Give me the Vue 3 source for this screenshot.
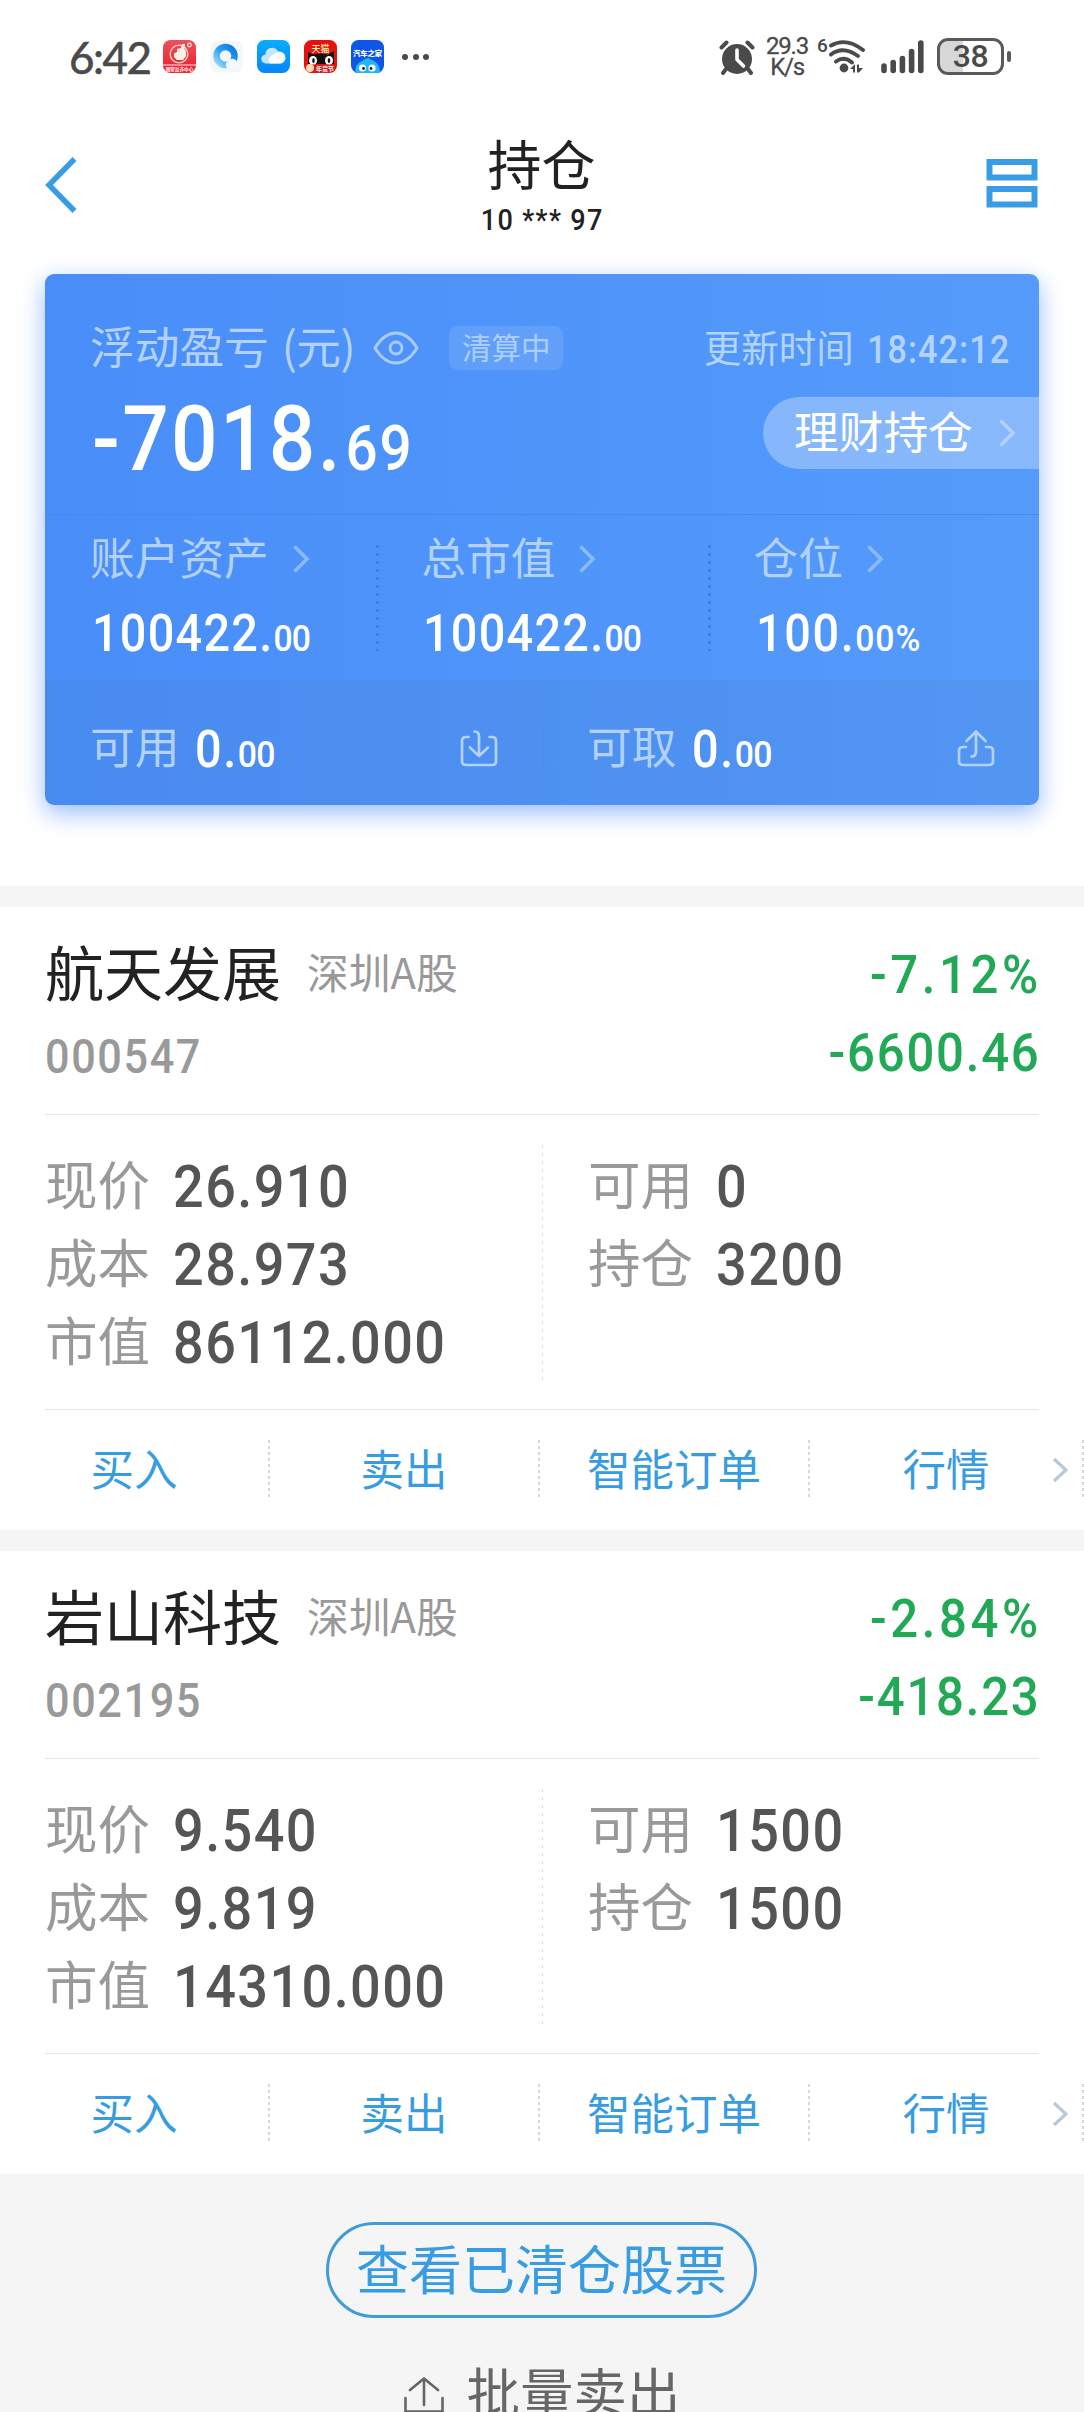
<script setup>
const stats = [
  { label: '账户资产', whole: '100422.', frac: '00' },
  { label: '总市值', whole: '100422.', frac: '00' },
  { label: '仓位', whole: '100.', frac: '00%' },
]

const holdings = [
  {
    name: '航天发展',
    market: '深圳A股',
    code: '000547',
    rate: '-7.12%',
    profit: '-6600.46',
    left: [['现价', '26.910'], ['成本', '28.973'], ['市值', '86112.000']],
    right: [['可用', '0'], ['持仓', '3200']],
  },
  {
    name: '岩山科技',
    market: '深圳A股',
    code: '002195',
    rate: '-2.84%',
    profit: '-418.23',
    left: [['现价', '9.540'], ['成本', '9.819'], ['市值', '14310.000']],
    right: [['可用', '1500'], ['持仓', '1500']],
  },
]

const actions = ['买入', '卖出', '智能订单', '行情']
</script>

<template>
  <div class="page">
    <div class="status">
      <span class="clock">6:42</span>
      <div class="apps">
        <svg viewBox="0 0 33 33" width="33" height="33">
          <defs>
            <linearGradient id="red" x1="0" y1="0" x2="0" y2="1"><stop offset="0" stop-color="#e9525a" /><stop offset="1" stop-color="#f01c2c" /></linearGradient>
          </defs>
          <rect width="33" height="33" rx="7.5" fill="url(#red)" />
          <circle cx="16" cy="14" r="8.800" fill="none" stroke="#ffd9d2" stroke-width="1.300" />
          <path d="M11 13.500l3-1.500V9l4-1 1-4h3l-.5 5 1.500 2v5l-3 4h-6l-3-3z" fill="#fff1e6" />
          <circle cx="26.500" cy="5" r="1.800" fill="none" stroke="#ffe5df" stroke-width="1.200" />
          <path d="M0 25h33" stroke="#fff" stroke-width=".9" />
          <text x="16.500" y="30.500" text-anchor="middle" font-size="4.600" font-weight="700" fill="#fff">国家反诈中心</text>
        </svg>
        <svg viewBox="0 0 33 33" width="33" height="33">
          <defs>
            <linearGradient id="ring" x1="1" y1="0" x2="0" y2="1"><stop offset="0" stop-color="#0a78e8" /><stop offset=".5" stop-color="#2ba0f5" /><stop offset="1" stop-color="#9fd8fb" /></linearGradient>
          </defs>
          <rect x=".5" y=".5" width="32" height="32" rx="7.500" fill="#f4f7fa" />
          <circle cx="15.500" cy="16" r="9" fill="none" stroke="url(#ring)" stroke-width="6.500" />
          <path d="M17 28a4.500 4.500 0 0 1 1-7 5 5 0 0 1 8.500 0 3.700 3.700 0 0 1 1 7z" fill="#f3f9ff" />
        </svg>
        <svg viewBox="0 0 33 33" width="33" height="33">
          <defs>
            <linearGradient id="sky" x1="0" y1="0" x2="0" y2="1"><stop offset="0" stop-color="#06aefc" /><stop offset="1" stop-color="#0786fb" /></linearGradient>
          </defs>
          <rect width="33" height="33" rx="7.500" fill="url(#sky)" />
          <path d="M9 23.500a4.500 4.500 0 0 1-.5-9 6.600 6.600 0 0 1 12.500-3 6 6 0 0 1 1.500 12z" fill="#c4e4ff" />
          <path d="M13 23.500a5 5 0 0 1 2-8c2-1 3-3.500 6-3.500a5.800 5.800 0 0 1 3 11.500z" fill="#fff" />
        </svg>
        <svg viewBox="0 0 33 33" width="33" height="33">
          <rect width="33" height="33" rx="7.500" fill="#e3140f" />
          <path d="M4 24V12l5 2.500q8-2 15 0l6-3.500v13z" fill="#15100f" />
          <ellipse cx="9" cy="20.500" rx="4" ry="4.500" fill="#fff" /><ellipse cx="25" cy="20.500" rx="4" ry="4.500" fill="#fff" />
          <ellipse cx="9.500" cy="20.500" rx="1.300" ry="2.500" fill="#15100f" /><ellipse cx="25" cy="20.500" rx="1.300" ry="2.500" fill="#15100f" />
          <path d="M4 24.500h25V27q0 5-5 6H8q-4-1-6-5z" fill="#e21512" />
          <circle cx="6" cy="28" r="4" fill="#ffd9b8" />
          <text x="16.500" y="11.500" text-anchor="middle" font-size="9" font-weight="500" fill="#fff0b8">天猫</text>
          <text x="21" y="31" text-anchor="middle" font-size="6" font-weight="700" fill="#fff">年货节</text>
        </svg>
        <svg viewBox="0 0 33 33" width="33" height="33">
          <rect width="33" height="33" rx="7.500" fill="#0f55e6" />
          <path d="M4 33q0-10 8-12.500 3-3 6-2.500 1 1.500 4 2.500 7 3 7 12.500z" fill="#24b5f6" />
          <circle cx="11.500" cy="28" r="3.600" fill="#fff" /><circle cx="21" cy="28" r="3.600" fill="#fff" />
          <circle cx="12.500" cy="28.500" r="1.400" fill="#123" /><circle cx="20" cy="28.500" r="1.400" fill="#123" />
          <text x="16.500" y="16" text-anchor="middle" font-size="7.300" font-weight="900" fill="#fff">汽车之家</text>
        </svg>
      </div>
      <div class="dots"><i></i><i></i><i></i></div>
      <svg class="alarm" viewBox="0 0 36 36" width="36" height="36">
        <circle cx="18" cy="20" r="15" fill="#4a4a4a" />
        <g fill="none" stroke="#4a4a4a" stroke-width="4" stroke-linecap="round"><path d="M2.500 8.500l5-5M33.500 8.500l-5-5M7 30l-3 4M29 30l3 4" /></g>
        <path d="M18 11v9.500l6.500 6.500" fill="none" stroke="#fff" stroke-width="3.600" stroke-linecap="round" stroke-linejoin="round" />
      </svg>
      <div class="speed"><span>29.3</span><span>K/s</span></div>
      <span class="gen">6</span>
      <svg class="wifi" viewBox="0 0 40 36" width="40" height="36">
        <g fill="none" stroke="#4a4a4a" stroke-width="3.900" stroke-linecap="round"><path d="M3 6.500q15-8.500 32 4.500M3 15.500q12-9 27 1.500M8 22.500q8-6 16 1" /></g>
        <circle cx="16" cy="29" r="4.400" fill="#4a4a4a" />
        <path d="M22 30l5-5v8.500h-2V30zM29 25.500h2V29h4l-4 4.500h-2z" fill="#4a4a4a" />
      </svg>
      <svg class="signal" viewBox="0 0 44 36" width="44" height="36">
        <g stroke="#4a4a4a" stroke-width="5.600" stroke-linecap="round"><path d="M3 27v4.500M12.200 23.500v8M21.400 19.500v12M30.600 12.500v19M39.800 4v27.500" /></g>
      </svg>
      <div class="battery"><span>38</span></div>
      <div class="cap"></div>
    </div>

    <header class="nav">
      <svg viewBox="0 0 34 58" width="34" height="58"><path d="M30.500 3L5 29l25.500 26" fill="none" stroke="#389de3" stroke-width="5.500" /></svg>
      <div class="title">
        <h1>持仓</h1>
        <p>10 *** 97</p>
      </div>
      <svg viewBox="0 0 52 50" width="52" height="50"><g fill="none" stroke="#389de3" stroke-width="6"><path d="M3.500 4h45v15.500h-45zM3.500 31h45v15.500h-45z" /></g></svg>
    </header>

    <section class="summary">
      <div class="head">
        <div class="line1">
          <span class="cjk label">浮动盈亏</span><span class="cjk label unit">(元)</span>
          <svg class="eye" viewBox="0 0 46 34" width="46" height="34">
            <g fill="none" stroke="#aaccfd" stroke-width="2.800"><path d="M2 17C8 7 16 2 23 2s15 5 21 15c-6 10-14 15-21 15S8 27 2 17z" stroke-linejoin="round" /><circle cx="23" cy="17" r="6" /></g>
          </svg>
          <span class="tag"><span class="cjk">清算中</span></span>
          <span class="cjk upd">更新时间</span>
          <span class="num time">18:42:12</span>
        </div>
        <div class="line2">
          <span class="num total">-7018.<small>69</small></span>
          <div class="pill">
            <span class="cjk">理财持仓</span>
            <svg viewBox="0 0 18 30" width="18" height="30"><path d="M2.500 2.500L15 15 2.500 27.500" fill="none" stroke="#b5d2fe" stroke-width="3.500" /></svg>
          </div>
        </div>
      </div>
      <div class="stats">
        <div v-for="s in stats" :key="s.label" class="stat">
          <div class="stat-label">
            <span class="cjk label">{{ s.label }}</span>
            <svg viewBox="0 0 18 30" width="18" height="30"><path d="M2.500 2.500L15 15 2.500 27.500" fill="none" stroke="#8abafc" stroke-width="3.500" /></svg>
          </div>
          <span class="num amount">{{ s.whole }}<small>{{ s.frac }}</small></span>
        </div>
      </div>
      <div class="foot">
        <div class="cash">
          <span class="cjk label">可用</span>
          <span class="num amount">0.<small>00</small></span>
          <svg viewBox="0 0 38 38" width="38" height="38">
            <g fill="none" stroke="#b3d1fb" stroke-width="2.700" stroke-linecap="round" stroke-linejoin="round"><path d="M8.500 8H6Q2 8 2 12v20q0 4 4 4h26q4 0 4-4V12q0-4-4-4h-2.500M14.500 2.500q4.500 0 4.500 5V27M10 18.500l9 8.500 9-8.500" /></g>
          </svg>
        </div>
        <div class="cash">
          <span class="cjk label">可取</span>
          <span class="num amount">0.<small>00</small></span>
          <svg viewBox="0 0 38 38" width="38" height="38">
            <g fill="none" stroke="#b3d1fb" stroke-width="2.700" stroke-linecap="round" stroke-linejoin="round"><path d="M9 18H6q-4 0-4 4v10q0 4 4 4h26q4 0 4-4V22q0-4-4-4h-3M14.500 27.500q4.500 0 4.500-5V2.500M9.500 12L19 2.500l9.500 9.500" /></g>
          </svg>
        </div>
      </div>
    </section>

    <section v-for="h in holdings" :key="h.code" class="holding">
      <div class="top">
        <div class="who">
          <div class="name-row"><span class="cjk name">{{ h.name }}</span><span class="cjk market">{{ h.market }}</span></div>
          <span class="num code">{{ h.code }}</span>
        </div>
        <div class="gain">
          <span class="num rate">{{ h.rate }}</span>
          <span class="num">{{ h.profit }}</span>
        </div>
      </div>
      <div class="detail">
        <dl>
          <div v-for="r in h.left" :key="r[0]"><dt class="cjk">{{ r[0] }}</dt><dd class="num">{{ r[1] }}</dd></div>
        </dl>
        <dl>
          <div v-for="r in h.right" :key="r[0]"><dt class="cjk">{{ r[0] }}</dt><dd class="num">{{ r[1] }}</dd></div>
        </dl>
      </div>
      <div class="actions">
        <a v-for="a in actions" :key="a"><span class="cjk">{{ a }}</span></a>
        <svg class="more" viewBox="0 0 16 26" width="16" height="26"><path d="M2 2l12 11L2 24" fill="none" stroke="#b9c7da" stroke-width="3.200" /></svg>
      </div>
    </section>

    <footer>
      <button><span class="cjk">查看已清仓股票</span></button>
      <div class="batch">
        <svg viewBox="0 0 42 48" width="42" height="48">
          <g fill="none" stroke="#666" stroke-width="2.600" stroke-linecap="round" stroke-linejoin="round"><path d="M2.500 22v13.500h37V22M21 29V2.500M7 14L21 2.500 35 14" /></g>
        </svg>
        <span class="cjk">批量卖出</span>
      </div>
    </footer>
  </div>
</template>

<style>
html,
body {
  margin: 0;
  background: #f5f5f6;
  overflow: hidden;
}
</style>

<style scoped>
* {
  box-sizing: border-box;
}
.page {
  width: 1084px;
  height: 2412px;
  overflow: hidden;
  background: #fff;
  font-family: "Noto Sans CJK SC", sans-serif;
  color: #222;
}
svg {
  flex: none;
  display: block;
}
.cjk {
  font-family: "Noto Sans CJK SC", sans-serif;
  line-height: 1;
  margin-top: -0.112em;
  white-space: nowrap;
}
/* narrow figures, close to a DIN face */
.num {
  font-family: Roboto, "Noto Sans", sans-serif;
  font-weight: 500;
  line-height: 1;
  white-space: nowrap;
  transform: scaleX(0.9);
  transform-origin: left center;
}

/* status bar */
.status {
  display: flex;
  height: 113px;
  padding-left: 69px;
  align-items: center;
  color: #4a4a4a;
}
.clock {
  width: 94px;
  font: 44px/46px Lato, sans-serif;
  letter-spacing: -1.5px;
  -webkit-text-stroke: 0.6px #4a4a4a;
}
.apps {
  display: flex;
  gap: 14px;
}
.dots {
  display: flex;
  gap: 4.5px;
  margin-left: 18px;
  width: 317px;
}
.dots i {
  width: 6px;
  height: 6px;
  border-radius: 50%;
  background: #4a4a4a;
}
.speed {
  display: flex;
  flex-direction: column;
  align-items: center;
  width: 44px;
  margin-left: 10px;
  font: 24px/21px Roboto, sans-serif;
  letter-spacing: -1.2px;
  -webkit-text-stroke: 0.3px #4a4a4a;
}
.gen {
  margin: -22px 0 0 8px;
  width: 11px;
  font: 500 19px/20px Roboto, sans-serif;
}
.signal {
  margin-left: 13px;
}
.battery {
  display: flex;
  align-items: center;
  justify-content: center;
  width: 67px;
  height: 37px;
  margin-left: 12px;
  border: 3px solid #5a5a5a;
  border-radius: 11px;
  background: linear-gradient(90deg, #d8d8d8 38%, #fff 38%);
  font: 500 32px/31px Roboto, sans-serif;
  letter-spacing: -0.5px;
}
.cap {
  width: 4px;
  height: 11px;
  margin-left: 3px;
  border-radius: 2px;
  background: #5a5a5a;
}

/* nav */
.nav {
  display: flex;
  align-items: flex-start;
  justify-content: space-between;
  height: 161px;
  padding: 43px 46px 0 44px;
}
.nav > svg:last-child {
  margin-top: 2px;
}
.title {
  display: flex;
  flex-direction: column;
  align-items: center;
  margin: -17px 0 0 19px;
}
h1 {
  margin: 0;
  font-size: 54px;
  font-weight: 400;
  line-height: 48px;
}
p {
  margin: 18px 0 0 1px;
  font: 500 30px/30px Roboto, sans-serif;
  letter-spacing: 1.5px;
  transform: scaleX(0.9);
}

/* summary card */
.summary {
  width: 994px;
  height: 531px;
  margin: 0 45px;
  border-radius: 9px;
  background: linear-gradient(90deg, #498ef8, #559bfb);
  box-shadow: 0 8px 24px rgba(84, 144, 255, 0.6);
  color: #fff;
}
.head {
  height: 240px;
  padding: 52px 0 0 45px;
}
.line1,
.line2 {
  display: flex;
  align-items: center;
}
.line1 {
  height: 44px;
}
.label {
  font-size: 44.7px;
  color: #b2d1fd;
}
.unit {
  margin-left: 13px;
  letter-spacing: -0.5px;
}
.eye {
  margin-left: 18px;
}
.tag {
  display: flex;
  align-items: center;
  justify-content: center;
  width: 114px;
  height: 44px;
  margin-left: 30px;
  border-radius: 9px;
  background: rgba(255, 255, 255, 0.11);
  font-size: 29.5px;
  color: #aecffd;
}
.upd {
  margin-left: auto;
  font-size: 37.5px;
  color: #b4d3fd;
}
.time {
  margin: 3px 29px 0 -3px;
  font-size: 38px;
  letter-spacing: 1.2px;
  color: #b4d3fd;
  transform-origin: right center;
}
.line2 {
  justify-content: space-between;
  height: 72px;
  margin-top: 27px;
}
.total {
  margin-top: 13px;
  margin-left: 2px;
  font-size: 91px;
  letter-spacing: 2.6px;
}
.total small {
  margin-left: 3px;
  font-size: 63px;
  letter-spacing: 2px;
}
.pill {
  display: flex;
  align-items: center;
  justify-content: space-between;
  width: 276px;
  height: 72px;
  padding: 0 23px 0 31px;
  border-radius: 36px 0 0 36px;
  background: rgba(255, 255, 255, 0.3);
  font-size: 44.7px;
}
.stats {
  display: flex;
  height: 166px;
  border-top: 1px solid #4789ec;
}
.stat {
  width: 331.3px;
  padding: 22px 0 0 45px;
}
.stat:last-child {
  padding-left: 46px;
}
.stat + .stat {
  background: repeating-linear-gradient(180deg, #407fe2 0 3px, transparent 3px 8px) -2px 30px / 3px 106px no-repeat;
  background-origin: border-box;
  background-position: 0 30px;
}
.stat-label {
  display: flex;
  align-items: center;
  gap: 23px;
  height: 44px;
}
.amount {
  font-size: 52px;
  letter-spacing: 1.8px;
}
.amount small {
  font-size: 37.5px;
  letter-spacing: -0.2px;
}
.stat .amount {
  display: block;
  margin: 27px 0 0 2px;
}
.stat:not(:last-child) .amount {
  letter-spacing: 1.4px;
}
.stat:not(:last-child) .amount small {
  letter-spacing: -1px;
}
.stat:last-child .amount small {
  letter-spacing: 1px;
}
.foot {
  display: flex;
  height: 125px;
  border-radius: 0 0 9px 9px;
  background: rgba(70, 120, 190, 0.14);
}
.cash {
  display: flex;
  align-items: center;
  width: 497px;
  padding: 11px 44px 0 45px;
}
.cash + .cash {
  background: linear-gradient(#4a88e6, #4a88e6) 0 46px / 1px 42px no-repeat;
}
.cash svg {
  margin-left: auto;
}
.cash .amount {
  margin: 4px 0 0 16px;
}
.cash .amount small {
  letter-spacing: -1px;
}

/* holdings */
.holding {
  height: 644px;
  border-top: 21px solid #f5f5f5;
}
.summary + .holding {
  margin-top: 81px;
}
.top {
  display: flex;
  justify-content: space-between;
  height: 208px;
  margin: 0 45px;
  padding-top: 38px;
  border-bottom: 1px solid #e6e6e6;
}
.name-row {
  display: flex;
  align-items: center;
  height: 58px;
  gap: 26px;
}
.name {
  font-size: 59px;
}
.market {
  font-size: 41.8px;
  color: #999;
}
.code {
  display: block;
  margin: 30px 0 0 0;
  font-size: 48px;
  letter-spacing: 1.8px;
  color: #999;
}
.gain {
  display: flex;
  flex-direction: column;
  align-items: flex-end;
  gap: 23px;
  padding-top: 2px;
  color: #22a955;
}
.gain .num {
  margin-right: -2px;
  font-size: 54.5px;
  letter-spacing: 2px;
  transform-origin: right center;
}
.gain .rate {
  margin-right: -3px;
  letter-spacing: 4px;
}
.detail {
  display: flex;
  height: 295px;
  margin: 0 45px;
  border-bottom: 1px solid #e6e6e6;
}
dl {
  width: 50%;
  margin: 0;
  padding: 31px 0 0 0;
}
dl + dl {
  padding-left: 46px;
  background: repeating-linear-gradient(180deg, #ddd 0 3px, transparent 3px 8px) -1px 30px / 2px 235px no-repeat;
}
dl div {
  display: flex;
  align-items: center;
  height: 78px;
}
dt {
  font-size: 52.5px;
  color: #999;
}
dd {
  margin: 3px 0 0 23px;
  font-size: 60px;
  letter-spacing: 1.6px;
  color: #555;
}
.actions {
  position: relative;
  display: flex;
  height: 120px;
}
.actions a {
  display: flex;
  align-items: center;
  justify-content: center;
  width: 270px;
  padding-right: 2px;
  font-size: 43.5px;
  color: #389ce0;
  background: repeating-linear-gradient(180deg, #d8d8d8 0 3px, transparent 3px 6px) right 30px / 2px 58px no-repeat;
}
.actions a:nth-child(4) {
  width: 274px;
}
.more {
  position: absolute;
  right: 16px;
  top: 47px;
}

/* footer */
footer {
  display: flex;
  flex-direction: column;
  align-items: center;
  height: 238px;
  padding-top: 48px;
  background: #f5f5f6;
}
button {
  display: flex;
  flex: none;
  align-items: center;
  justify-content: center;
  width: 431px;
  height: 96px;
  margin-right: 1px;
  padding: 0;
  border: 3px solid #429bd9;
  border-radius: 48px;
  background: none;
  font-size: 53px;
  color: #389ce2;
}
.batch {
  display: flex;
  flex: none;
  align-items: center;
  gap: 22px;
  margin: 44px 0 0 -1px;
  font-size: 53.5px;
  color: #666;
}
.batch svg {
  margin-top: 14px;
}
</style>
